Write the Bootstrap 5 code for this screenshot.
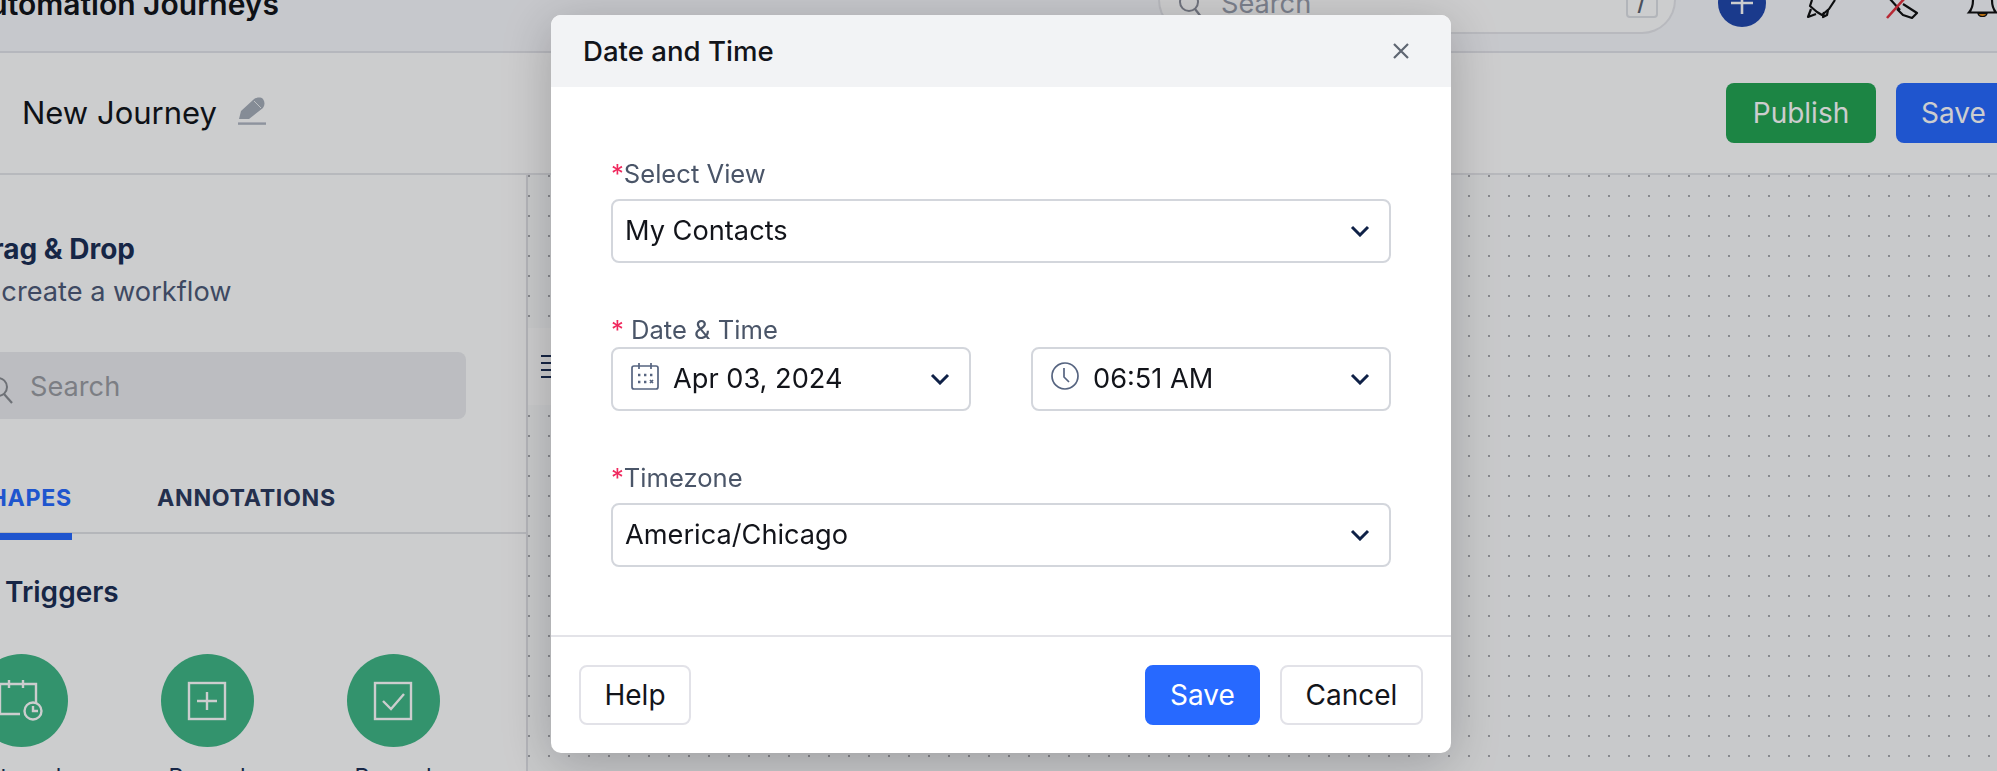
<!doctype html>
<html lang="en">
<head>
<meta charset="utf-8">
<title>Date and Time</title>
<link href="https://cdn.jsdelivr.net/npm/bootstrap@5.3.0/dist/css/bootstrap.min.css" rel="stylesheet">
<style>
html,body{height:100%;}
body{font-family:Inter,"Liberation Sans",sans-serif;background:#fff;color:#12141a;overflow:hidden;}
.app-shell{width:1997px;height:771px;overflow:hidden;}
.top-strip{height:53px;background:#f8f9fd;border-bottom:2px solid #e3e4ea;padding-bottom:17px;overflow:hidden;}
.top-title{width:279px;flex:none;white-space:nowrap;font-size:30px;font-weight:600;line-height:34px;margin-bottom:13px;}
.top-search{width:518px;height:60px;flex:none;margin-left:879px;background:#fff;border:2px solid #e6e7ec;border-radius:0 0 34px 34px;border-top:0;padding:0 16px 0 18px;}
.top-search-icon{margin-bottom:11px;}
.top-search-word{font-size:27.2px;color:#9aa0ae;line-height:30px;margin-left:17px;margin-bottom:13px;}
.key-hint{width:32px;height:36px;border:2px solid #dfe1e6;border-radius:4px;margin-bottom:14px;color:#5d6472;font-size:28px;line-height:32px;text-align:center;}
.plus-disc{width:48px;height:48px;border-radius:50%;background:#2148ad;margin-left:42px;margin-bottom:7px;flex:none;}
.bar-icon{flex:none;display:block;}
.top-glyph{margin-bottom:16px;overflow:visible;}
.gl-rocket{margin-left:41px;}
.gl-pen{margin-left:52px;}
.gl-bell{margin-left:50px;}
.title-strip{height:122px;background:#fff;border-bottom:2px solid #e5e6ea;padding-left:22px;padding-right:0;}
.journey-name{font-size:31px;line-height:40px;color:#12141a;white-space:nowrap;}
.pencil-mark{margin-left:21px;margin-bottom:4px;}
.act-btn{height:60px;font-size:28px;color:#fff;border-radius:8px;border:0;padding:0;}
.act-pub{width:150px;background:#23a553;}
.act-save{width:115px;background:#2769ff;margin-left:20px;margin-right:-14px;}
.work-row{height:596px;}
.side-panel{width:528px;flex:none;background:#fff;border-right:2px solid #e0e1e6;overflow:hidden;}
.side-inner{width:588px;margin-left:-60px;}
.drag-title{font-size:28px;font-weight:700;line-height:32px;color:#1c2f55;padding-left:32px;margin-top:58px;white-space:nowrap;}
.drag-sub{font-size:27.2px;line-height:32px;color:#4e5b78;margin-top:11px;padding-left:22px;white-space:nowrap;}
.find-box{width:526px;height:67px;margin-top:44px;background:#ebecef;border-radius:8px;padding-left:46px;}
.find-word{font-size:27.2px;color:#9b9da3;margin-left:16px;margin-top:3px;}
.tab-row{margin-top:59px;height:56px;border-bottom:2px solid #e2e3e7;}
.tab-item{font-size:23.2px;font-weight:700;letter-spacing:.7px;line-height:40px;color:#2c3a5e;white-space:nowrap;}
.tab-on{width:132px;color:#2769ff;border-bottom:7px solid #2769ff;height:62px;text-align:right;}
.tab-off{margin-left:85px;}
.trig-head{font-size:28px;font-weight:600;line-height:32px;color:#1c2f55;margin-top:42px;padding-left:65px;}
.shape-grid{margin-top:46px;padding-left:0;}
.shape-cell{width:186px;flex:none;text-align:center;}
.shape-cell-first{margin-left:-12px;}
.shape-disc{width:93px;height:93px;border-radius:50%;background:#40b786;margin:0 auto;}
.shape-label{margin-top:15px;font-size:23px;line-height:30px;color:#1c2f55;white-space:nowrap;}
.canvas-area{flex:1;position:relative;background-color:#fafbfc;background-image:radial-gradient(circle at 1px 1px,#a9abb0 1px,transparent 1.4px);background-size:20px 20px;}
.side-handle{position:absolute;left:0;top:153px;width:60px;height:77px;background:#fff;}
.handle-lines{margin:26px 0 0 13px;}
.modal-backdrop.show{--bs-backdrop-bg:#00030a;--bs-backdrop-opacity:.2;}
.date-dialog{--bs-modal-width:900px;max-width:900px;margin:15px 0 0 551px;}
.date-shell{height:738px;border:0;border-radius:10px;overflow:hidden;box-shadow:0 10px 50px rgba(0,0,0,.22);}
.date-head{height:72px;background:#f2f3f5;padding:0 41px 0 32px;border:0;border-radius:0;}
.date-title{font-size:27.6px;font-weight:500;color:#12141a;line-height:32px;}
.date-body{flex:none;height:548px;padding:72px 60px 0;}
.date-foot{height:118px;border-top:2px solid #e3e3e8;padding:0 28px 0 28px;border-radius:0;}
.fld-label{display:block;font-size:25.6px;line-height:30px;color:#4a5568;margin-bottom:10px;}
.fld-label-tight{margin-bottom:2px;}
.fld-gap{margin-top:52px;}
.req-star{color:#f0295e;}
.fld-select{height:64px;font-size:27.2px;color:#12141a;border:2px solid #d3d6dc;border-radius:8px;padding:0 50px 0 12px;--bs-form-select-bg-img:url("data:image/svg+xml,%3csvg xmlns='http://www.w3.org/2000/svg' viewBox='0 0 20 12'%3e%3cpath fill='none' stroke='%230f2147' stroke-width='3' d='M2 2l8 8 8-8'/%3e%3c/svg%3e");background-size:20px 12px;background-position:right 19px center;}
.fld-icon-pad{padding-left:60px;}
.fld-wrap{width:360px;}
.fld-icon{position:absolute;left:20px;top:15px;}
.dlg-btn{height:60px;font-size:28px;border-radius:8px;padding:0;color:#12141a;background:#fff;border:2px solid #e2e2e8;}
.dlg-help{width:112px;}
.dlg-save{width:115px;background:#2769ff;border-color:#2769ff;color:#fff;}
.dlg-cancel{width:143px;margin-left:20px !important;}
</style>
</head>
<body>
<div class="app-shell">
  <header class="top-strip d-flex align-items-end">
    <div class="top-title d-flex justify-content-end">Automation Journeys</div>
    <div class="top-search d-flex align-items-end">
      <svg class="bar-icon top-search-icon" width="26" height="30" viewBox="0 0 26 30"><circle cx="11" cy="11" r="9" fill="none" stroke="#8c909c" stroke-width="2"/><path d="M17 18l7 9" stroke="#8c909c" stroke-width="2.2" fill="none"/></svg>
      <span class="top-search-word">Search</span>
      <span class="key-hint ms-auto">/</span>
    </div>
    <div class="plus-disc d-flex align-items-center justify-content-center">
      <svg width="24" height="24" viewBox="0 0 24 24"><path d="M12 1v22M1 12h22" stroke="#fff" stroke-width="2.6"/></svg>
    </div>
    <svg class="bar-icon top-glyph gl-rocket" width="28" height="18" viewBox="0 0 28 18" fill="none" stroke="#111" stroke-width="2.2" stroke-linejoin="round"><path d="M5 0L3 6l7 6 5 3 7-6L28 0"/><path d="M4 9L1 17l8-3"/><path d="M21 10l-1 5-4 2 1-5"/></svg>
    <svg class="bar-icon top-glyph gl-pen" width="31" height="18" viewBox="0 0 31 18" fill="none"><path d="M3-1l10 11M16 4l14 9-5 5-9-3-6-6" stroke="#111" stroke-width="2.2" stroke-linejoin="round"/><path d="M0 18L17-1" stroke="#e5323f" stroke-width="2.6"/></svg>
    <svg class="bar-icon top-glyph gl-bell" width="29" height="18" viewBox="0 0 29 18" fill="none"><path d="M5 0C5 6 4 9 1 12.5H28C25 9 24 6 24 0" stroke="#111" stroke-width="2.2"/><path d="M10 13.5c1 4 8 4 9 0z" fill="#e58a14" stroke="#111" stroke-width="1.2"/></svg>
  </header>
  <div class="title-strip d-flex align-items-center">
    <span class="journey-name">New Journey</span>
    <svg class="bar-icon pencil-mark" width="28" height="28" viewBox="0 0 28 28"><path d="M1 22l2-8L15 3C18 0 23 0 25 2C27 5 27 8 25 11L11 22z" fill="#a7aeba"/><path d="M16 4l7 7" stroke="#fff" stroke-width=".8"/><rect x="0" y="25.4" width="28" height="2.4" fill="#b1b7c3"/></svg>
    <button class="btn act-btn act-pub ms-auto" type="button">Publish</button>
    <button class="btn act-btn act-save" type="button">Save</button>
  </div>
  <div class="work-row d-flex">
    <aside class="side-panel">
      <div class="side-inner">
        <div class="drag-title">Drag &amp; Drop</div>
        <div class="drag-sub">To create a workflow</div>
        <div class="find-box d-flex align-items-center">
          <svg class="bar-icon mt-2" width="28" height="30" viewBox="0 0 28 30"><circle cx="12" cy="12" r="9" fill="none" stroke="#8a8c92" stroke-width="2"/><path d="M18 19l8 9" stroke="#8a8c92" stroke-width="2.2"/></svg>
          <span class="find-word">Search</span>
        </div>
        <div class="tab-row d-flex">
          <div class="tab-item tab-on">SHAPES</div>
          <div class="tab-item tab-off">ANNOTATIONS</div>
        </div>
        <div class="trig-head">Triggers</div>
        <div class="shape-grid d-flex">
          <div class="shape-cell shape-cell-first">
            <div class="shape-disc d-flex align-items-center justify-content-center">
              <svg width="50" height="50" viewBox="0 0 50 50" fill="none" stroke="#fff" stroke-width="2.4"><path d="M24 38H4V8h36v20M13 4v8M27 4v8"/><circle cx="37" cy="35" r="8.5"/><path d="M37 30v5h5"/></svg>
            </div>
            <div class="shape-label">Interval</div>
          </div>
          <div class="shape-cell">
            <div class="shape-disc d-flex align-items-center justify-content-center">
              <svg width="40" height="40" viewBox="0 0 40 40" fill="none" stroke="#fff" stroke-width="2.4"><rect x="2" y="2" width="36" height="36"/><path d="M20 11v18M10 20h20"/></svg>
            </div>
            <div class="shape-label">Record</div>
          </div>
          <div class="shape-cell">
            <div class="shape-disc d-flex align-items-center justify-content-center">
              <svg width="40" height="40" viewBox="0 0 40 40" fill="none" stroke="#fff" stroke-width="2.4"><rect x="2" y="2" width="36" height="36"/><path d="M10 20l8 8 13-15"/></svg>
            </div>
            <div class="shape-label">Record</div>
          </div>
        </div>
      </div>
    </aside>
    <main class="canvas-area">
      <div class="side-handle">
        <svg class="bar-icon handle-lines" width="14" height="26" viewBox="0 0 14 26"><path d="M0 2h14M0 9h14M0 16h14M0 23h14" stroke="#1c2f55" stroke-width="2"/></svg>
      </div>
    </main>
  </div>
</div>

<div class="modal-backdrop show"></div>
<div class="modal d-block" tabindex="-1" role="dialog" aria-modal="true">
  <div class="modal-dialog date-dialog">
    <div class="modal-content date-shell">
      <div class="modal-header date-head">
        <h5 class="modal-title date-title">Date and Time</h5>
        <svg class="ms-auto" width="18" height="18" viewBox="0 0 18 18"><path d="M2 2l14 14M16 2L2 16" stroke="#5f6672" stroke-width="2.2"/></svg>
      </div>
      <div class="modal-body date-body">
        <label class="fld-label"><span class="req-star">*</span>Select View</label>
        <select class="form-select fld-select"><option>My Contacts</option></select>
        <label class="fld-label fld-label-tight fld-gap"><span class="req-star">*</span> Date &amp; Time</label>
        <div class="d-flex justify-content-between">
          <div class="fld-wrap position-relative">
            <select class="form-select fld-select fld-icon-pad"><option>Apr 03, 2024</option></select>
            <svg class="fld-icon" width="28" height="28" viewBox="0 0 28 28" fill="none" stroke="#566480" stroke-width="1.7"><rect x="1" y="4" width="26" height="23" rx="2"/><path d="M8 1v6M20 1v6"/><path d="M7 13h2.4M13 13h2.4M19 13h2.4M7 20h2.4M13 20h2.4" stroke-width="2.4"/><path d="M19 18l3 3M22 18l-3 3"/></svg>
          </div>
          <div class="fld-wrap position-relative">
            <select class="form-select fld-select fld-icon-pad"><option>06:51 AM</option></select>
            <svg class="fld-icon" width="28" height="28" viewBox="0 0 28 28" fill="none" stroke="#566480" stroke-width="1.7"><circle cx="14" cy="14" r="13"/><path d="M13 6v9l5 5"/></svg>
          </div>
        </div>
        <label class="fld-label fld-gap"><span class="req-star">*</span>Timezone</label>
        <select class="form-select fld-select"><option>America/Chicago</option></select>
      </div>
      <div class="modal-footer date-foot d-flex align-items-center justify-content-start">
        <button class="btn dlg-btn dlg-help m-0" type="button">Help</button>
        <button class="btn dlg-btn dlg-save m-0 ms-auto" type="button">Save</button>
        <button class="btn dlg-btn dlg-cancel m-0" type="button">Cancel</button>
      </div>
    </div>
  </div>
</div>
<script src="https://cdn.jsdelivr.net/npm/bootstrap@5.3.0/dist/js/bootstrap.bundle.min.js"></script>
</body>
</html>
